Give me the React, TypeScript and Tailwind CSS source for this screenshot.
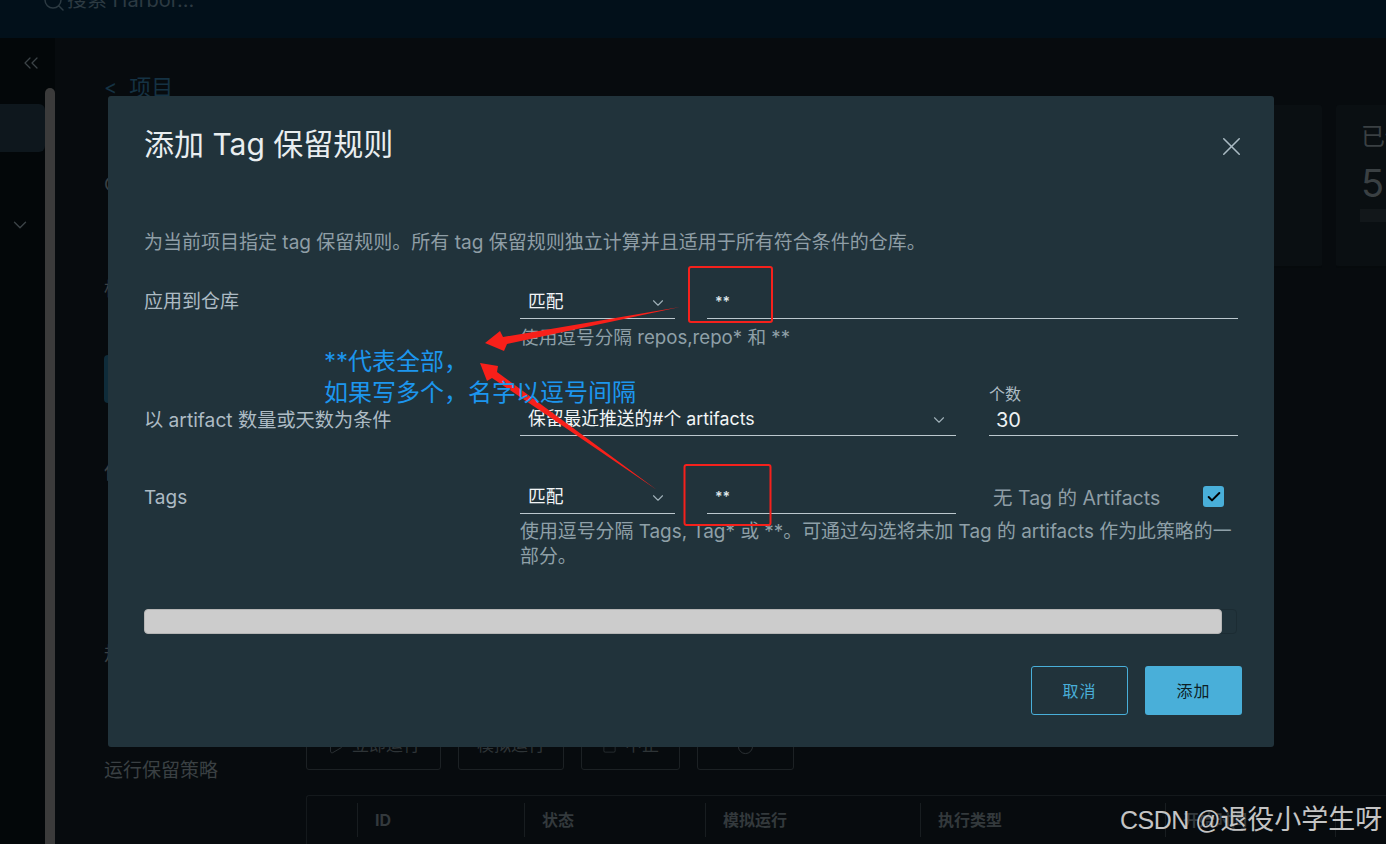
import { ChevronDown, ChevronsLeft, Check, Circle, Play, Search, Square, X } from "lucide-react";

const font = `font-['Inter','Noto_Sans_CJK_SC',sans-serif]`;

function StatCard({ title, value }: { title?: string; value?: string }) {
    return (
        <div className="w-[200px] h-[163px] shrink-0 rounded-[3px] bg-[#0a0f12] border-b-2 border-[#060a0c] pl-[25px] pt-[16px]">
            {title && <div className="text-[24px] leading-[32px] text-[#3a4043] whitespace-nowrap">{title}</div>}
            {value && <div className="text-[38px] leading-[44px] mt-[8px] text-[#3a4043]">{value}</div>}
            {value && <div className="h-[13px] w-[160px] -ml-[1px] mt-[4px] bg-[#12171a]" />}
        </div>
    );
}

function ToolbarButton({ width, label, icon }: { width: string; label?: string; icon?: React.ReactNode }) {
    return (
        <div className={`${width} h-[50px] border border-[#1c2124] rounded-[3px] flex items-center justify-center gap-[8px] pt-[10px] pb-[8px] text-[#2e3437] text-[17px]`}>
            {icon}
            {label && <span className="whitespace-nowrap">{label}</span>}
        </div>
    );
}

function Background() {
    return (
        <div className="h-[844px] w-[1386px] overflow-hidden bg-[#070b0e] flex flex-col">
            <header className="h-[38px] shrink-0 bg-[#02101a] flex items-start pl-[42px] text-[#2c3a42]">
                <Search size={24} strokeWidth={1.5} className="-mt-[11px]" />
                <span className="text-[20px] leading-[24px] -mt-[12px] ml-[1px] whitespace-nowrap">搜索 Harbor...</span>
            </header>
            <div className="flex flex-1 min-h-0">
                <aside className="w-[55px] shrink-0 bg-[#030709] flex flex-col">
                    <div className="h-[50px] flex items-center justify-end pr-[12px] text-[#3c4347]">
                        <ChevronsLeft size={24} strokeWidth={1.25} />
                    </div>
                    <div className="flex flex-1 min-h-0">
                        <div className="w-[45px] flex flex-col">
                            <div className="h-[48px] mt-[16px] rounded-r-[6px] bg-[#0e171d]" />
                            <div className="mt-[62px] flex justify-end pr-[14px] text-[#3c4347]">
                                <ChevronDown size={22} strokeWidth={1.5} />
                            </div>
                        </div>
                        <div className="w-[10px] rounded-t-[5px] bg-[#3b3b3b]" />
                    </div>
                </aside>
                <main className="flex-1 min-w-0 pl-[49px] flex flex-col">
                    <div className="flex items-center gap-[12px] h-[24px] mt-[37px] text-[#153243] text-[22px]">
                        <span className="text-[20px]">&lt;</span>
                        <span>项目</span>
                    </div>
                    <div className="flex flex-1 min-h-0 mt-[6px]">
                        <div className="w-[202px] shrink-0 flex flex-col text-[#3a4043] text-[19px] leading-[24px]">
                            <div className="mt-[68px] h-[24px]">CVE 白名单</div>
                            <div className="mt-[81px] h-[24px]">标签</div>
                            <div className="mt-[53px] h-[48px] w-[150px] rounded-l-[4px] bg-[#0f2c3a]" />
                            <div className="mt-[58px] h-[24px]">保留规则</div>
                            <div className="mt-[158px] h-[24px]">规则</div>
                            <div className="mt-[92px] h-[24px]">运行保留策略</div>
                        </div>
                        <div className="flex-1 min-w-0 flex flex-col justify-between">
                            <div className="flex gap-[14px] justify-end -mr-[150px]">
                                <StatCard />
                                <StatCard title="已使用" value="5" />
                            </div>
                            <div className="flex flex-col">
                                <div className="flex gap-[17px]">
                                    <ToolbarButton width="w-[135px]" label="立即运行" icon={<Play size={17} strokeWidth={1.25} />} />
                                    <ToolbarButton width="w-[106px]" label="模拟运行" />
                                    <ToolbarButton width="w-[99px]" label="中止" icon={<Square size={15} strokeWidth={1.25} />} />
                                    <ToolbarButton width="w-[97px]" icon={<Circle size={17} strokeWidth={1.25} />} />
                                </div>
                                <div className="h-[49px] mt-[25px] border-t border-l border-[#14191c] rounded-tl-[3px] flex items-center text-[#33393c] text-[16px] font-bold">
                                    <div className="w-[51px] h-[34px] border-r border-[#181d20]" />
                                    <div className="w-[167px] h-[34px] border-r border-[#181d20] pl-[17px] leading-[34px]">ID</div>
                                    <div className="w-[181px] h-[34px] border-r border-[#181d20] pl-[17px] leading-[34px]">状态</div>
                                    <div className="w-[215px] h-[34px] border-r border-[#181d20] pl-[17px] leading-[34px]">模拟运行</div>
                                    <div className="w-[245px] h-[34px] border-r border-[#181d20] pl-[17px] leading-[34px]">执行类型</div>
                                    <div className="w-[170px] h-[34px] border-r border-[#181d20] pl-[17px] leading-[34px]">开始时间</div>
                                </div>
                            </div>
                        </div>
                    </div>
                </main>
            </div>
        </div>
    );
}

function Select({ value, width }: { value: string; width: string }) {
    return (
        <div className={`${width} h-[32px] shrink-0 border-b border-[#bcc8ce] flex items-center justify-between pl-[8px] pr-[8px] text-[#f2f5f6] text-[17.75px]`}>
            <span className="whitespace-nowrap">{value}</span>
            <ChevronDown size={18} strokeWidth={1.5} className="text-[#9fb0b8]" />
        </div>
    );
}

function TextInput({ value, width }: { value: string; width: string }) {
    return (
        <div className={`${width} h-[32px] shrink-0 border-b border-[#bcc8ce] flex items-center pl-[8px] pb-[3px] text-[#dfe6e9] text-[14px] font-semibold`}>
            {value}
        </div>
    );
}

function Modal() {
    return (
        <div className="absolute left-[108px] top-[96px] w-[1166px] h-[651px] rounded-[3px] bg-[#21333b] px-[36px] pt-[30px] flex flex-col">
            <div className="flex items-center justify-between h-[36px]">
                <h2 className="text-[30px] leading-[36px] text-[#e9eef0] font-normal whitespace-nowrap">添加 Tag 保留规则</h2>
                <X size={31} strokeWidth={1.2} className="text-[#a9bac2] -mr-[9px] mt-[4px]" />
            </div>

            <p className="mt-[69px] text-[19px] leading-[24px] text-[#8f9ea6] whitespace-nowrap">
                为当前项目指定 tag 保留规则。所有 tag 保留规则独立计算并且适用于所有符合条件的仓库。
            </p>

            <div className="mt-[22px] flex">
                <div className="w-[376px] h-[42px] flex items-end pb-[5px] text-[19px] leading-[24px] text-[#adbbc4]">应用到仓库</div>
                <div className="flex-1">
                    <div className="flex items-end h-[42px] gap-[32px]">
                        <Select value="匹配" width="w-[155px]" />
                        <TextInput value="**" width="w-[531px]" />
                    </div>
                    <div className="mt-[7px] text-[18.67px] leading-[24px] text-[#8fa0a8]">使用逗号分隔 repos,repo* 和 **</div>
                </div>
            </div>

            <div className="mt-[36px] flex">
                <div className="w-[376px] h-[50px] flex items-end pb-[4px] text-[19.2px] leading-[24px] text-[#adbbc4] whitespace-nowrap">以 artifact 数量或天数为条件</div>
                <div className="flex-1 flex items-end gap-[33px]">
                    <Select value="保留最近推送的#个 artifacts" width="w-[436px]" />
                    <div className="w-[249px]">
                        <div className="text-[16px] leading-[16px] h-[18px] text-[#adbbc4]">个数</div>
                        <div className="h-[32px] border-b border-[#bcc8ce] flex items-center pl-[7px] text-[#eef2f3] text-[20px]">30</div>
                    </div>
                </div>
            </div>

            <div className="mt-[46px] flex">
                <div className="w-[376px] h-[32px] flex items-center text-[19px] text-[#adbbc4]">Tags</div>
                <div className="flex-1">
                    <div className="flex items-end h-[32px] w-[704px]">
                        <Select value="匹配" width="w-[155px]" />
                        <div className="ml-[32px]">
                            <TextInput value="**" width="w-[249px]" />
                        </div>
                        <span className="ml-[37px] h-[32px] leading-[32px] text-[19.5px] text-[#8f9ea6] whitespace-nowrap">无 Tag 的 Artifacts</span>
                        <span className="ml-auto mb-[7px] w-[21px] h-[21px] rounded-[3px] bg-[#49afd9] flex items-center justify-center text-black">
                            <Check size={16} strokeWidth={3} />
                        </span>
                    </div>
                    <div className="mt-[5px] w-[718px] text-[18.9px] leading-[25px] text-[#8fa0a8]">
                        使用逗号分隔 Tags, Tag* 或 **。可通过勾选将未加 Tag 的 artifacts 作为此策略的一部分。
                    </div>
                </div>
            </div>

            <div className="mt-[40px] h-[25px] w-[1093px] shrink-0 rounded-[4px] border border-[#1c2c33]">
                <div className="-m-px h-[25px] w-[1078px] rounded-[4px] bg-[#cccccc] border border-[#b5b5b5]" />
            </div>

            <div className="mt-[32px] flex justify-end gap-[17px] -mr-[4px]">
                <button className="w-[97px] h-[49px] rounded-[3px] border border-[#49afd9] text-[#49afd9] text-[16px] tracking-[1px]">取消</button>
                <button className="w-[97px] h-[49px] rounded-[3px] bg-[#49afd9] text-[#0d1f26] text-[16px] tracking-[1px]">添加</button>
            </div>
        </div>
    );
}

// red boxes, arrows and the blue note were drawn on the screenshot afterwards
function Annotations() {
    return (
        <>
            <svg className="absolute left-0 top-0 pointer-events-none" width="1386" height="844" viewBox="0 0 1386 844">
                <rect x="689" y="267" width="83" height="55" rx="2" fill="none" stroke="#f5211c" strokeWidth="2" />
                <rect x="684.5" y="465" width="86" height="60" rx="2" fill="none" stroke="#f5211c" strokeWidth="2" />
                <polygon points="680,307 503,337 500,331 485,343 504,351 507,344" fill="#f8201a" />
                <polygon points="657,490 497,372 498,366 480,363 487,381 492,378" fill="#f8201a" />
            </svg>
            <div className="absolute left-[324px] top-[346px] text-[24px] leading-[31px] text-[#1c96ee] whitespace-nowrap">
                <div>**代表全部，</div>
                <div>如果写多个，名字以逗号间隔</div>
            </div>
            <div className="absolute left-[1120px] top-[802px] font-['Liberation_Sans','Noto_Sans_CJK_SC',sans-serif] text-[27px] leading-[36px] text-[#c4c4c4] whitespace-nowrap">
                <span className="text-[25px] tracking-[-0.5px]">CSDN @</span>退役小学生呀
            </div>
        </>
    );
}

export default function App() {
    return (
        <div className={`relative w-[1386px] h-[844px] overflow-hidden ${font}`}>
            <Background />
            <Modal />
            <Annotations />
        </div>
    );
}
